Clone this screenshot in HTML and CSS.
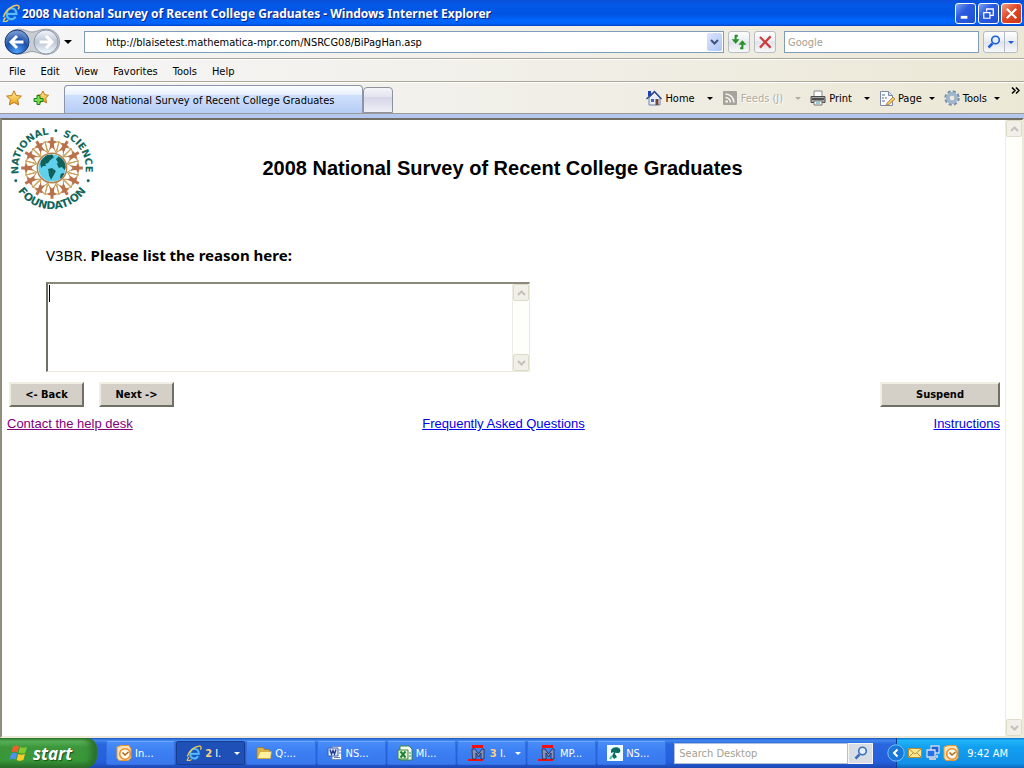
FILE: index.html
```html
<!DOCTYPE html>
<html lang="en">
<head>
    <meta charset="UTF-8">
    <meta name="viewport" content="width=device-width, initial-scale=1.0">
    <title>2008 National Survey of Recent College Graduates</title>
    <link rel="stylesheet" href="styles.css">
</head>
<body>
    <!-- shared icons -->
    <svg class="sprite" aria-hidden="true">
        <defs>
            <linearGradient id="gold" x1="0" y1="0" x2="0" y2="1">
                <stop offset="0" stop-color="#fff3a0"/>
                <stop offset="1" stop-color="#f0a010"/>
            </linearGradient>
            <radialGradient id="blueBall" cx="50%" cy="90%" r="80%">
                <stop offset="0" stop-color="#4aa0f8"/>
                <stop offset="0.6" stop-color="#1d50a8"/>
                <stop offset="1" stop-color="#6f93cc"/>
            </radialGradient>
            <linearGradient id="greyBall" x1="0" y1="0" x2="0" y2="1">
                <stop offset="0" stop-color="#f4f7fc"/>
                <stop offset="0.5" stop-color="#bcc6d6"/>
                <stop offset="1" stop-color="#f4fbff"/>
            </linearGradient>
        </defs>
        <symbol id="ie" viewBox="0 0 16 16">
            <path d="M4.500 8.800h8.300C12.800 2.200 4.200 2.200 4.200 8.800c0 5.400 6 6 7.800 2.400" fill="none" stroke="#1c6cd0" stroke-width="3"/>
            <path d="M4.500 8.800h8.300C12.800 2.200 4.200 2.200 4.200 8.800c0 5.400 6 6 7.800 2.400" fill="none" stroke="#58bcff" stroke-width="1.800"/>
            <path d="M3 12C-.5 17 2 16.500 5.500 14.500M1.300 11.500C3 5.500 10 .5 14 1.200c1.500.3 1.300 2.200.4 3.500" fill="none" stroke="#f4cc50" stroke-width="1.300"/>
        </symbol>
        <symbol id="chev-down" viewBox="0 0 9 6">
            <path d="M1 1l3.500 3.500L8 1" fill="none" stroke="currentColor" stroke-width="2"/>
        </symbol>
        <symbol id="chev-up" viewBox="0 0 9 6">
            <path d="M1 5l3.500-3.500L8 5" fill="none" stroke="currentColor" stroke-width="2"/>
        </symbol>
        <symbol id="magnifier" viewBox="0 0 14 14">
            <path d="M1.500 12.500l4-4" stroke="currentColor" stroke-width="2.500"/>
            <circle cx="8.500" cy="5" r="3.800" fill="#e4f0ff" stroke="currentColor" stroke-width="1.600"/>
        </symbol>
        <symbol id="outlook" viewBox="0 0 16 16">
            <path d="M1 2l4-1.500h8L15 4v9l-3 2.500H3L1 13z" fill="#fbe0b0" stroke="#e89838"/>
            <circle cx="9" cy="9" r="5.300" fill="#fffaf0" stroke="#e89030" stroke-width="1.600"/>
            <path d="M6.500 7.500L9 10l3.500-3" fill="none" stroke="#a86820" stroke-width="1.500"/>
        </symbol>
        <symbol id="mpr" viewBox="0 0 20 16">
            <path d="M5 0h11v3H5zM1 14h15v2H1z" fill="#f01010"/>
            <path d="M5 4h3l3.500 5L15 4h2v10h-3V8l-2.500 4L9 8v6H5.500z" fill="#8890b4" stroke="#20284c" stroke-width=".8"/>
        </symbol>
        <symbol id="figure" viewBox="-46 -46 92 92">
            <path d="M0-25l7.300-2M0-25l-7.300-2M0-24l4.200 8.500M0-24l-4.200 8.500M7.300-27l-3 10M-7.300-27l3 10" fill="none" stroke="#c9a25c" stroke-width="1.100"/>
            <path d="M-1.500-31.500h3v3.500l3.500 1-3 2 .5 6L0-21l-2.500 2 .5-6-3-2 3.500-1z" fill="#b9704c"/>
        </symbol>
    </svg>

    <header class="titlebar">
        <svg class="icon18"><use href="#ie"/></svg>
        <span class="title">2008 National Survey of Recent College Graduates - Windows Internet Explorer</span>
        <div class="window-buttons">
            <button class="win" aria-label="Minimize"><svg viewBox="0 0 20 20"><path d="M5 14h7" stroke="#fff" stroke-width="3"/></svg></button>
            <button class="win" aria-label="Restore"><svg viewBox="0 0 20 20"><path d="M8 8V5h7v7h-3M8 5.500h7M5 9h6.500v6H5zM5 9h7" fill="none" stroke="#fff" stroke-width="1.300"/></svg></button>
            <button class="win close" aria-label="Close"><svg viewBox="0 0 20 20"><path d="M5 5l10 10M15 5L5 15" stroke="#fff" stroke-width="2.300"/></svg></button>
        </div>
    </header>

    <div class="chrome">
        <div class="navbar">
            <div class="travel">
                <svg class="travel-back" viewBox="0 0 58 28" aria-hidden="true">
                    <path d="M13 1.500C20 0 24 4 29 4s10-4 17-2.500C60 4 60 24 46 26c-7 1.500-12-2.500-17-2.500S20 27 13 26C0 24 0 4 13 1.500z" fill="#c9ccd3" stroke="#9a9fa8"/>
                    <circle cx="14" cy="14" r="12" fill="url(#blueBall)" stroke="#1b3c78"/>
                    <path d="M20.500 14H9M14 8l-6 6 6 6" fill="none" stroke="#fff" stroke-width="3"/>
                    <circle cx="43" cy="14" r="12" fill="url(#greyBall)" stroke="#8b96a8"/>
                    <path d="M36.500 14H48M43 8l6 6-6 6" fill="none" stroke="#fff" stroke-width="3"/>
                </svg>
                <button class="arrow-button" aria-label="Recent pages"><i class="arrow"></i></button>
            </div>
            <div class="address">
                <input type="text" aria-label="Address" value="http://blaisetest.mathematica-mpr.com/NSRCG08/BiPagHan.asp">
                <button class="drop" aria-label="Show addresses"><svg><use href="#chev-down"/></svg></button>
            </div>
            <button class="tool" aria-label="Refresh"><svg viewBox="0 0 16 16"><path d="M7 2.500H5V6M9 13.500h2V10" fill="none" stroke="#259025" stroke-width="1.800"/><path d="M1.500 5.500h7L5 9.500zM7.500 10.500h7L11 6.500z" fill="#259025"/></svg></button>
            <button class="tool" aria-label="Stop"><svg viewBox="0 0 16 16"><path d="M3.500 3.500l9.500 9.500M13 3L3.500 13" stroke="#cc3c3c" stroke-width="2"/></svg></button>
            <input class="search" type="text" aria-label="Search" placeholder="Google">
            <div class="search-go">
                <button aria-label="Go"><svg><use href="#magnifier"/></svg></button>
                <button class="more" aria-label="Search options"><i class="arrow"></i></button>
            </div>
        </div>

        <nav class="menubar">
            <button>File</button>
            <button>Edit</button>
            <button>View</button>
            <button>Favorites</button>
            <button>Tools</button>
            <button>Help</button>
        </nav>

        <div class="tabrow">
            <div class="favs">
                <button aria-label="Favorites Center"><svg viewBox="0 0 16 16"><path d="M8 .8l2.200 4.700 5.200.6-3.800 3.600 1 5.200L8 12.400l-4.600 2.500 1-5.200L.6 6.100l5.200-.6z" fill="url(#gold)" stroke="#c07818"/></svg></button>
                <button aria-label="Add to Favorites"><svg viewBox="0 0 16 16"><path d="M10 1l1.700 3.700 3.800.6-2.800 2.700.8 4.800L10 11l-4 2 .6-4.500L4 5.300l4-.6z" fill="url(#gold)" stroke="#c07818"/><path d="M4 5.500h3v3h3v3H7v3H4v-3H1v-3h3z" fill="#7ddc50" stroke="#1d8020"/></svg></button>
            </div>
            <button class="tab">2008 National Survey of Recent College Graduates</button>
            <button class="tab-new" aria-label="New Tab"></button>
            <div class="commands">
                <button class="split">
                    <svg viewBox="0 0 16 16"><path d="M3 8v7h11V8L8.500 2.500z" fill="#e8edf8" stroke="#7080a8"/><path d="M2 1h3v5H2z" fill="#2040b0"/><path d="M.5 9L8.500 1.500l7 7.500" fill="none" stroke="#304890" stroke-width="1.500"/><path d="M9.500 9h3v6h-3z" fill="#704838"/><path d="M5 9h3v3H5z" fill="#4068c0"/></svg>
                    Home <i class="arrow"></i>
                </button>
                <button class="split" disabled>
                    <svg viewBox="0 0 16 16"><rect x="1" y="1" width="14" height="14" rx="1" fill="#a5a39b"/><g fill="none" stroke="#f6f5ef" stroke-width="1.600"><path d="M3.500 7.500a5 5 0 0 1 5 5M3.500 4a8.500 8.500 0 0 1 8.500 8.500"/></g><circle cx="4.700" cy="11.500" r="1.300" fill="#f6f5ef"/></svg>
                    Feeds (J) <i class="arrow"></i>
                </button>
                <button class="split">
                    <svg viewBox="0 0 16 16"><path d="M4 1h8v6H4z" fill="#fff" stroke="#888"/><path d="M1 6.500h14v6H1z" fill="#a8a8a8" stroke="#4c4c4c"/><path d="M2 9h12" stroke="#333" stroke-width="1.500"/><path d="M4 11h8v4H4z" fill="#f2f8ff" stroke="#777"/><path d="M6 13h4" stroke="#38a0a0"/></svg>
                    Print <i class="arrow"></i>
                </button>
                <button>
                    <svg viewBox="0 0 16 16"><path d="M1.500 1.500h8l4 4v10h-12z" fill="#fcfdff" stroke="#7c8aa8"/><path d="M9.500 1.500v4h4" fill="#cdd8ee" stroke="#7c8aa8"/><path d="M3 5h3M3 8h2M6 8h2M3 11h3" stroke="#5068a0"/><path d="M8 13l6-6 2 2-6 5.500-3 .5z" fill="#f0c860" stroke="#a07040" stroke-width=".7"/></svg>
                    Page <i class="arrow"></i>
                </button>
                <button>
                    <svg viewBox="0 0 16 16"><circle cx="8" cy="8" r="6.500" fill="none" stroke="#7890ac" stroke-width="2.500" stroke-dasharray="3 2.100"/><circle cx="8" cy="8" r="4.500" fill="#f0f3f6" stroke="#9fb6cf" stroke-width="3"/><circle cx="8" cy="8" r="2.800" fill="#efecdf" stroke="#7890ac" stroke-width=".6"/></svg>
                    Tools <i class="arrow"></i>
                </button>
            </div>
            <button class="overflow" aria-label="More commands"><svg viewBox="0 0 9 7"><path d="M1 .5l3 3-3 3M5 .5l3 3-3 3" fill="none" stroke="#000" stroke-width="1.500"/></svg></button>
        </div>
    </div>

    <div class="viewport">
        <main class="page">
            <div class="banner">
                <svg class="logo" viewBox="-46 -46 92 92" role="img" aria-label="National Science Foundation">
                    <defs>
                        <path id="arcTop" d="M-34 6A34.500 34.500 0 1 1 34 6"/>
                        <path id="arcBottom" d="M-42 0A42 42 0 0 0 42 0"/>
                        <clipPath id="globe"><circle r="14"/></clipPath>
                    </defs>
                    <g class="logo-text">
                        <text class="logo-top"><textPath href="#arcTop" startOffset="0%">NATIONAL</textPath></text>
                        <text class="logo-top"><textPath href="#arcTop" startOffset="59%">SCIENCE</textPath></text>
                        <text class="logo-bottom"><textPath href="#arcBottom" startOffset="50%" text-anchor="middle">FOUNDATION</textPath></text>
                    </g>
                    <g fill="#12665a">
                        <circle cx="4" cy="-38" r="1.500"/>
                        <circle cx="-37" cy="13" r="1.500"/>
                        <circle cx="37" cy="13" r="1.500"/>
                    </g>
                    <g id="quarter">
                        <use href="#figure" x="-46" y="-46" width="92" height="92"/>
                        <use href="#figure" x="-46" y="-46" width="92" height="92" transform="rotate(30)"/>
                        <use href="#figure" x="-46" y="-46" width="92" height="92" transform="rotate(60)"/>
                    </g>
                    <use href="#quarter" transform="rotate(90)"/>
                    <use href="#quarter" transform="rotate(180)"/>
                    <use href="#quarter" transform="rotate(270)"/>
                    <circle r="15" fill="#e9f8f8" stroke="#b9804c" stroke-width="1.500"/>
                    <g clip-path="url(#globe)">
                        <circle r="14" fill="#60d0ec"/>
                        <path d="M-12-4l1-4 5-5 6-1 2 3-4 3-2 3-3 1 1 2-3 0-2 2zM-4 1l4-1 4 3-2 4-3 5-2-4zM4-9l3-3 5 4 3 6-2 4-3-3-3 1-2-4 1-2zM9 6l4-1-2 5-3 1z" fill="#10605c"/>
                    </g>
                </svg>
                <h1>2008 National Survey of Recent College Graduates</h1>
            </div>

            <form class="question">
                <label for="reason">V3BR. <b>Please list the reason here:</b></label>
                <div class="memo">
                    <textarea id="reason"></textarea>
                    <span class="caret"></span>
                    <div class="scrollbar">
                        <button type="button" aria-label="Scroll up"><svg><use href="#chev-up"/></svg></button>
                        <button type="button" aria-label="Scroll down"><svg><use href="#chev-down"/></svg></button>
                    </div>
                </div>
            </form>

            <div class="actions">
                <button class="classic">&lt;- Back</button>
                <button class="classic">Next -&gt;</button>
                <button class="classic suspend">Suspend</button>
            </div>

            <div class="links">
                <a class="visited" href="#help">Contact the help desk</a>
                <a href="#faq">Frequently Asked Questions</a>
                <a href="#instructions">Instructions</a>
            </div>
        </main>
        <div class="scrollbar">
            <button aria-label="Scroll page up"><svg><use href="#chev-up"/></svg></button>
            <button aria-label="Scroll page down"><svg><use href="#chev-down"/></svg></button>
        </div>
    </div>

    <footer class="taskbar">
        <button class="start">
            <svg viewBox="0 0 20 18"><path d="M4 2.500C6.500 1 8 1.500 10 2.500L8.500 8.500C6.500 7.300 4.500 7.300 2.500 8.500z" fill="#f0602c"/><path d="M11 3c2.500 1.200 4.500 1 7-.3l-1.700 6C14 10 12 9.700 9.500 8.800z" fill="#80cc30"/><path d="M2.200 9.700c2-1.300 4-1.200 6 0l-1.500 6c-2-1.200-4-1.200-6.200 0z" fill="#4c90f0"/><path d="M9.200 10c2.300 1.100 4.500 1 6.800-.2l-1.500 6c-2.500 1.300-4.500 1.200-6.800.1z" fill="#fccc28"/></svg>
            start
        </button>
        <div class="tasks">
            <button class="task"><svg><use href="#outlook"/></svg><span>In...</span></button>
            <button class="task active"><svg><use href="#ie"/></svg><span><em>2</em> I.</span><i class="arrow"></i></button>
            <button class="task"><svg viewBox="0 0 16 16"><path d="M1 3.500l1-1h5l1.500 2h5v9H1z" fill="#e0b040" stroke="#a47818" stroke-width=".7"/><path d="M1.500 13.500L4 6.500h11.500l-1 7z" fill="#fff0a0" stroke="#c89c38" stroke-width=".7"/></svg><span>Q:...</span></button>
            <button class="task"><svg viewBox="0 0 16 16"><path d="M5 1.500h9.500v13H5z" fill="#fff" stroke="#6c8cc8"/><path d="M12 5h2M12 8h2M7 12.500h6" stroke="#6080b8"/><path d="M1 3h10v8H1z" fill="#dce8fc" stroke="#3860b0"/><path d="M3 4.500L4.500 9 6 5.500 7.500 9 9 4.500" fill="none" stroke="#203c90" stroke-width="1.400"/></svg><span>NS...</span></button>
            <button class="task"><svg viewBox="0 0 16 16"><path d="M3 1h9l3 3v11H3z" fill="#f8fff4" stroke="#388840"/><path d="M1 5h10v9H1z" fill="#e4f4dc" stroke="#388840"/><path d="M3.500 6.500l5 6M8.500 6.500l-5 6" stroke="#208030" stroke-width="2"/><path d="M12 8h2M12 11h2" stroke="#388840"/></svg><span>Mi...</span></button>
            <button class="task"><svg class="wide"><use href="#mpr"/></svg><span><em>3</em> I.</span><i class="arrow"></i></button>
            <button class="task"><svg class="wide"><use href="#mpr"/></svg><span>MP...</span></button>
            <button class="task"><svg viewBox="0 0 16 16"><path d="M0 0h16v16H0z" fill="#f0fffc"/><path d="M4 5c1-3 7-4 9-1 1 2 0 4-2 4-2 0-3-1-3 1l2 3-3 2-2-3 2-4-3 1z" fill="#0c6c64"/><path d="M5 11l-2 3" stroke="#50b8a8" stroke-width="2"/></svg><span>NS...</span></button>
        </div>
        <div class="deskbar">
            <input type="text" aria-label="Search Desktop" placeholder="Search Desktop">
            <button aria-label="Search"><svg><use href="#magnifier"/></svg></button>
        </div>
        <div class="tray">
            <button class="expand" aria-label="Show hidden icons"><svg viewBox="0 0 18 18"><circle cx="9" cy="9" r="8.200" fill="#1c78d8" stroke="#78c0f8"/><path d="M10.500 5.500L7 9l3.500 3.500" fill="none" stroke="#fff" stroke-width="2"/></svg></button>
            <svg viewBox="0 0 16 16"><path d="M1.500 3.500h13v9h-13z" fill="#ffe890" stroke="#b88c30"/><path d="M2 4l6 5 6-5M2 12l4-4M14 12l-4-4" fill="none" stroke="#b88c30"/></svg>
            <svg viewBox="0 0 16 16"><path d="M6 1h8v7H6z" fill="#2060d0" stroke="#c8d8f0" stroke-width="1.300"/><path d="M2 5h8v7H2z" fill="#2870e0" stroke="#d4dff0" stroke-width="1.300"/><path d="M4 14h7M12 10v3" stroke="#c0c8d8" stroke-width="2"/></svg>
            <svg><use href="#outlook"/></svg>
            <span class="clock">9:42 AM</span>
        </div>
    </footer>
</body>
</html>
```
FILE: styles.css
```css
* {
    box-sizing: border-box;
}
body {
    margin: 0;
    height: 100vh;
    display: flex;
    flex-direction: column;
    overflow: hidden;
    font-family: 'DejaVu Sans Condensed', 'Liberation Sans', sans-serif;
    font-size: 11px;
    color: #000;
    background: #fff;
}
button, input, textarea {
    font: inherit;
    color: inherit;
    margin: 0;
    padding: 0;
    border: none;
    border-radius: 0;
    background: none;
}
button {
    display: flex;
    align-items: center;
}
button svg {
    flex: none;
}
input, textarea {
    outline: none;
    min-width: 0;
}
input::placeholder {
    color: #a5a18f;
    opacity: 1;
}
.sprite {
    position: absolute;
    width: 0;
    height: 0;
}
.arrow {
    border: 3px solid transparent;
    border-top-color: currentColor;
    border-bottom: none;
}

/* title bar */
.titlebar {
    display: flex;
    align-items: center;
    height: 26px;
    padding: 0 2px;
    gap: 2px;
    background: linear-gradient(#0a50d8, #0458e8 20%, #0054e3 55%, #0066ff 80%, #0060f8 92%, #0040c0);
}
.icon18 {
    width: 18px;
    height: 18px;
}
.title {
    flex: 1;
    font-family: 'Noto Sans', sans-serif;
    font-size: 12px;
    font-weight: bold;
    color: #fff;
    text-shadow: 1px 1px #0f1f80;
    white-space: nowrap;
}
.window-buttons {
    display: flex;
    gap: 2px;
}
.win {
    width: 21px;
    height: 21px;
    border: 1px solid #fff;
    border-radius: 3px;
    background: linear-gradient(135deg, #7ea2f0, #2a5be0 40%, #2050d0);
}
.win svg {
    width: 19px;
    height: 19px;
}
.close {
    background: linear-gradient(135deg, #f0a080, #e04828 45%, #c83810);
}

/* toolbars */
.chrome {
    background: linear-gradient(90deg, #f6f6f7, #f1f0ea 45%, #ece8d6);
    border-bottom: 4px solid #b6c7ef;
}
.navbar {
    display: flex;
    align-items: center;
    height: 33px;
    padding: 0 6px 0 3px;
    gap: 4px;
    border-bottom: 1px solid #aca899;
}
.travel {
    display: flex;
    align-items: center;
    width: 77px;
    gap: 3px;
}
.travel-back {
    width: 58px;
    height: 28px;
}
.arrow-button .arrow {
    border-width: 4px 4px 0;
}
.address {
    flex: 1;
    display: flex;
    align-items: center;
    height: 22px;
    padding: 1px;
    border: 1px solid #7f9db9;
    background: #fff;
}
.address input {
    flex: 1;
    padding-left: 20px;
}
.drop {
    width: 15px;
    height: 18px;
    justify-content: center;
    border-radius: 2px;
    background: linear-gradient(135deg, #dbe5fd, #adc4f6);
    color: #40557c;
}
.drop svg, .scrollbar svg {
    width: 9px;
    height: 6px;
}
.tool {
    width: 22px;
    height: 22px;
    justify-content: center;
    border: 1px solid #b8bcc4;
    border-radius: 3px;
    background: linear-gradient(#fff, #ebedf3 45%, #e0e3ec 50%, #f8f8f8);
}
.tool svg {
    width: 18px;
    height: 18px;
}
.search {
    width: 195px;
    height: 22px;
    margin-left: 4px;
    padding-left: 3px;
    border: 1px solid #7f9db9;
    background: #fff;
}
.search-go {
    display: flex;
    height: 22px;
    border: 1px solid #b4bccc;
    border-radius: 3px;
    background: linear-gradient(#fff, #ebedf3 45%, #e0e3ec 50%, #f8f8f8);
    color: #1c5cd8;
}
.search-go button {
    width: 20px;
    justify-content: center;
}
.search-go .more {
    width: 13px;
    border-left: 1px solid #b4bccc;
}
.search-go svg {
    width: 14px;
    height: 14px;
}
.menubar {
    display: flex;
    height: 23px;
    padding: 1px 0 0 9px;
    gap: 15px;
    border-top: 1px solid #fff;
    border-bottom: 1px solid #aca899;
}
.tabrow {
    display: flex;
    align-items: flex-end;
    height: 32px;
    border-top: 1px solid #fff;
    border-bottom: 1px solid #9a9a96;
}
.favs {
    display: flex;
    align-items: center;
    align-self: stretch;
    width: 64px;
    padding-left: 6px;
    gap: 11px;
}
.favs svg, .commands svg {
    width: 16px;
    height: 16px;
}
.tab {
    width: 299px;
    height: 28px;
    justify-content: center;
    padding: 1px 10px 0 0;
    border: 1px solid #8c96a8;
    border-bottom: none;
    border-radius: 4px 4px 0 0;
    background: linear-gradient(#fbfdff, #eaf2fe 30%, #cfe0fb 35%, #b6cdf6);
    white-space: nowrap;
}
.tab-new {
    width: 30px;
    height: 26px;
    border: 1px solid #8e929c;
    border-radius: 4px 4px 0 0;
    background: linear-gradient(#f4f4f8, #e4e5f0 35%, #d5d6e8 40%, #f0f0f8);
}
.commands {
    flex: 1;
    display: flex;
    align-self: stretch;
    justify-content: flex-end;
    gap: 9px;
}
.commands button {
    gap: 3px;
    white-space: nowrap;
}
.commands .arrow {
    margin-left: 4px;
}
.commands .split .arrow {
    margin-left: 9px;
}
.commands button:disabled {
    color: #b0ad9f;
    text-shadow: 1px 1px #fff;
}
.overflow {
    align-self: flex-start;
    width: 24px;
    padding: 4px 0 0 11px;
}
.overflow svg {
    width: 9px;
    height: 7px;
}

/* survey page */
.viewport {
    flex: 1;
    display: flex;
    min-height: 0;
    border: 2px solid #716f64;
    border-left-color: #918e80;
    border-right-color: #ece9d8;
    border-bottom-color: #ece9d8;
}
.page {
    flex: 1;
    padding: 2px 5px 0;
}
.scrollbar {
    display: flex;
    flex-direction: column;
    justify-content: space-between;
    width: 17px;
    border-left: 1px solid #eeede5;
    background: #fefefb;
}
.scrollbar button {
    height: 17px;
    justify-content: center;
    border: 1px solid #dedbc9;
    border-radius: 2px;
    background: #f0efe8;
    color: #c4c2b8;
}
.banner {
    display: grid;
    grid-template-columns: 90px 1fr 92px;
    align-items: center;
}
.logo {
    width: 90px;
    height: 92px;
}
.logo-text {
    font-family: 'DejaVu Sans', sans-serif;
    font-weight: bold;
    fill: #12665a;
}
.logo-top {
    font-size: 10px;
}
.logo-bottom {
    font-size: 11px;
}
h1 {
    margin: 0;
    font-family: 'Liberation Sans', Arial, sans-serif;
    font-size: 20px;
    text-align: center;
}
.question {
    padding: 31px 39px 0;
}
.question label {
    display: block;
    font-family: 'Noto Sans', sans-serif;
    font-size: 15px;
    line-height: 20px;
}
.memo {
    position: relative;
    display: flex;
    max-width: 484px;
    height: 90px;
    margin-top: 17px;
    border: 2px solid #716f64;
    border-top-color: #8b887a;
    border-right: 1px solid #ece9d8;
    border-bottom: 1px solid #ece9d8;
}
.memo textarea {
    flex: 1;
    padding: 2px;
    resize: none;
    overflow: hidden;
}
.caret {
    position: absolute;
    left: 1px;
    top: 1px;
    width: 1px;
    height: 17px;
    background: #000;
}
.actions {
    display: flex;
    gap: 15px;
    padding: 10px 0 0 2px;
}
.classic {
    width: 75px;
    height: 25px;
    justify-content: center;
    border: 2px solid;
    border-color: #f1efe2 #716f64 #716f64 #f1efe2;
    background: #d4d0c8;
    font-weight: bold;
}
.suspend {
    width: 120px;
    margin-left: auto;
}
.links {
    display: grid;
    grid-template-columns: 1fr auto 1fr;
    margin-top: 9px;
    font-family: 'Liberation Sans', Arial, sans-serif;
    font-size: 13px;
    line-height: 16px;
}
.links a {
    color: #0000ee;
}
.links .visited {
    color: #800080;
}
.links a:last-child {
    text-align: right;
}

/* taskbar */
.taskbar {
    display: flex;
    align-items: center;
    height: 30px;
    background: linear-gradient(#1f52c0, #3f88f0 8%, #2a66e0 20%, #245edc 80%, #1c48b0);
    color: #fff;
}
.start {
    width: 97px;
    height: 30px;
    padding-left: 9px;
    gap: 4px;
    border-radius: 0 10px 12px 0;
    background: linear-gradient(#2c7c2c, #5cb85c 10%, #3c963c 30%, #389838 75%, #2a6c2a);
    box-shadow: inset -6px 0 6px #2a702a;
    font-family: 'Open Sans', sans-serif;
    font-size: 17px;
    font-weight: bold;
    font-style: italic;
    text-shadow: 1px 1px 1px #1c4c1c;
}
.start svg {
    width: 20px;
    height: 18px;
}
.tasks {
    flex: 1;
    display: flex;
    padding: 0 8px 0 9px;
    gap: 1px;
}
.task {
    flex: 1;
    height: 24px;
    padding-left: 9px;
    gap: 3px;
    border: 1px solid #3470e0;
    border-top-color: #6ca4fc;
    border-radius: 2px;
    background: linear-gradient(#4a8cf8, #3c80f4 40%, #3878ec);
    white-space: nowrap;
}
.task svg {
    width: 16px;
    height: 16px;
}
.task .wide {
    width: 20px;
}
.task em {
    font-style: normal;
    font-weight: bold;
    color: #ffd080;
}
.task .arrow {
    margin: 0 4px 0 auto;
}
.active {
    border-color: #183c90;
    background: #1e50b8;
}
.deskbar {
    display: flex;
    width: 199px;
    height: 21px;
}
.deskbar input {
    flex: 1;
    padding-left: 4px;
    border: 1px solid #b0c0dc;
    background: #fff;
}
.deskbar button {
    width: 25px;
    justify-content: center;
    border: 1px solid #f4f4f4;
    background: #d8dce4;
    color: #3c70b8;
}
.deskbar svg {
    width: 14px;
    height: 14px;
}
.tray {
    display: flex;
    align-items: center;
    height: 30px;
    margin-left: 23px;
    padding-right: 16px;
    gap: 2px;
    border-left: 1px solid #103c90;
    background: linear-gradient(#1070d0, #20b4f8 8%, #12a0f0 30%, #1090e8 85%, #0c68b8);
}
.tray svg {
    width: 16px;
    height: 16px;
}
.tray .expand {
    margin-left: -10px;
}
.tray .expand svg {
    width: 18px;
    height: 18px;
}
.clock {
    margin-left: 6px;
}
```
